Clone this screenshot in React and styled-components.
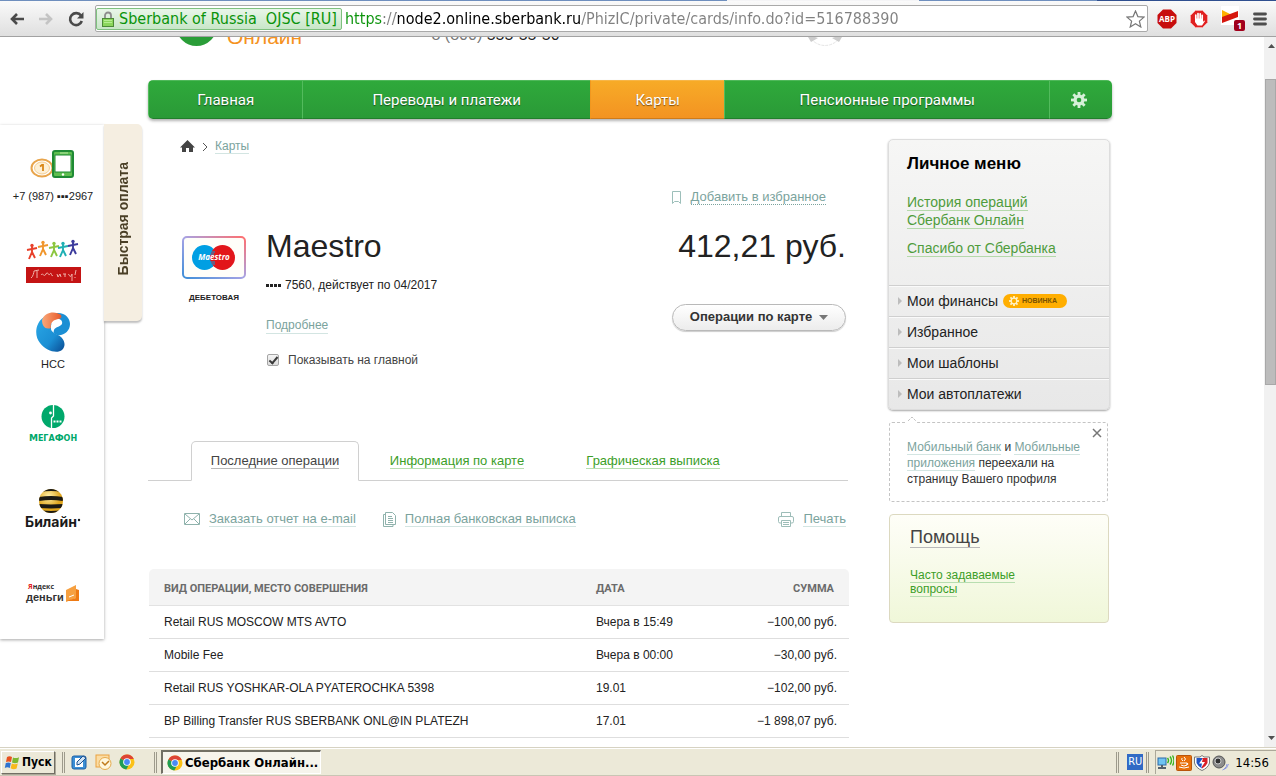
import React, { useState } from 'react';
import styled, { createGlobalStyle, css } from 'styled-components';

const SANS = "'Liberation Sans', Arial, sans-serif";
const UI = "'DejaVu Sans Condensed', 'Open Sans', Tahoma, sans-serif";

const GlobalStyle = createGlobalStyle`
  * {
    box-sizing: border-box;
  }
  body {
    margin: 0;
    background: #ffffff;
    color: #222222;
    font-family: ${SANS};
    font-size: 12px;
    line-height: 16px;
  }
  button, input {
    font-family: inherit;
  }
  svg {
    display: block;
    flex: none;
  }
`;

/* ---------- browser window ---------- */

const Window = styled.div`
  display: flex;
  flex-direction: column;
  height: 100vh;
  overflow: hidden;
`;

const TabStrip = styled.div`
  flex: none;
  height: 1px;
  background: linear-gradient(to right, #6f8fbe 57%, #f4f4f6 57%, #f4f4f6 72%, #6f8fbe 72%, #6f8fbe 86%, #2f4f8f 86%);
`;

const Toolbar = styled.div`
  flex: none;
  display: flex;
  align-items: center;
  height: 36px;
  padding: 0 4px 0 8px;
  background: linear-gradient(#fafafa, #dfdfdf);
  border-bottom: 1px solid #a2a2a2;
`;

const HeaderGap = styled.div`
  width: 9px;
`;

const ToolButton = styled.button`
  display: flex;
  align-items: center;
  justify-content: center;
  width: ${(p) => p.$width || 29}px;
  height: 26px;
  padding: 0;
  border: 0;
  background: none;
`;

const AddressBar = styled.form`
  flex: 1;
  min-width: 0;
  display: flex;
  align-items: center;
  height: 27px;
  margin-right: 4px;
  padding: 1px 0;
  background: #ffffff;
  border: 1px solid #a9a9a9;
  border-radius: 2px;
  font-family: ${UI};
  font-size: 16px;
`;

const Certificate = styled.span`
  flex: none;
  display: flex;
  align-items: center;
  gap: 5px;
  height: 22px;
  padding: 0 4px 0 5px;
  color: #0a930a;
  background: linear-gradient(#e9f6e9, #c8e6c8);
  border: 1px solid #7fc07f;
  border-radius: 2px;
  white-space: pre;
`;

const UrlInput = styled.input`
  flex: 1;
  min-width: 0;
  padding: 0 0 0 3px;
  border: 0;
  outline: none;
  font-size: 16px;
  color: transparent;
  background: linear-gradient(to right, #0a930a 41px, #808080 41px, #808080 54px, #000000 54px, #000000 238px, #808080 238px);
  -webkit-background-clip: text;
  background-clip: text;
`;

const Viewport = styled.div`
  flex: 1;
  min-height: 0;
  display: flex;
  overflow: hidden;
`;

const Page = styled.div`
  flex: 1;
  min-width: 0;
  display: flex;
  padding-right: 152px;
`;

const Scrollbar = styled.div`
  flex: none;
  display: flex;
  flex-direction: column;
  width: 12px;
  background: #f1f1f1;
`;

const ScrollArrow = styled.button`
  display: flex;
  align-items: center;
  justify-content: center;
  height: 18px;
  padding: 0 0 0 3px;
  border: 0;
  background: none;
`;

const ScrollTrack = styled.div`
  flex: 1;
  display: flex;
  flex-direction: column;
  padding: 24px 0 0 1px;
`;

const ScrollThumb = styled.div`
  height: 47%;
  background: #bcbcbc;
  border: 1px solid #a8a8a8;
`;

/* ---------- quick payment panel ---------- */

const FastPay = styled.aside`
  flex: none;
  display: flex;
  align-items: flex-start;
  width: 148px;
  margin-top: 87px;
`;

const FastPayList = styled.ul`
  display: flex;
  flex-direction: column;
  align-items: center;
  width: 104px;
  margin: 1px 0 0;
  padding: 24px 0 32px 2px;
  list-style: none;
  background: #ffffff;
  box-shadow: 0 1px 3px rgba(0, 0, 0, 0.35);
`;

const FastPayItem = styled.li`
  display: flex;
  flex-direction: column;
  align-items: center;
  gap: ${(p) => p.$gap || 0}px;
  height: ${(p) => p.$height}px;
  font-size: 11px;
  white-space: nowrap;
`;

const FastPayTab = styled.button`
  display: flex;
  align-items: center;
  justify-content: center;
  width: 38px;
  height: 197px;
  padding: 0 0 8px;
  border: 0;
  border-radius: 0 5px 5px 0;
  background: #f5eee1;
  box-shadow: 0 2px 2px rgba(0, 0, 0, 0.25);
  color: #4a3f26;
  font-size: 14px;
  font-weight: bold;
  span {
    writing-mode: vertical-rl;
    transform: rotate(180deg);
  }
`;

/* ---------- site header and menu ---------- */

const Content = styled.div`
  flex: 1;
  min-width: 0;
`;

const SiteHeader = styled.header`
  display: flex;
  align-items: flex-end;
  height: 43px;
  padding: 0 268px 31px 28px;
  overflow: hidden;
`;

const HeaderSpace = styled.div`
  flex: ${(p) => p.$grow};
`;

const LogoText = styled.span`
  margin-left: 10px;
  color: #f5921e;
  font-size: 21px;
  line-height: 24px;
`;

const HeaderPhone = styled.span`
  padding-bottom: 2px;
  color: #222222;
  font-size: 16px;
  line-height: 24px;
  i {
    color: #777777;
    font-style: normal;
  }
`;

const Nav = styled.nav`
  display: flex;
  height: 39px;
  border-radius: 5px;
  overflow: hidden;
  box-shadow: 0 2px 3px rgba(0, 0, 0, 0.3);
`;

const NavItem = styled.a`
  flex: ${(p) => p.$grow} 1 0;
  display: flex;
  align-items: center;
  justify-content: center;
  color: #ffffff;
  font-family: Roboto, ${SANS};
  font-size: 15px;
  text-decoration: none;
  text-shadow: 0 1px 1px rgba(0, 0, 0, 0.5);
  background: linear-gradient(#2fa93b, #2a9a37);
  border-left: 1px solid #53bb5d;
  border-top: 1px solid #4fb85a;
  border-bottom: 1px solid #217f2c;
  ${(p) =>
    p.$active &&
    css`
      background: linear-gradient(#f7ab27, #f39322);
      border-color: #f7b648 #d9801a #cf7b19 #f0971f;
    `}
  ${(p) =>
    p.$fixed &&
    css`
      flex: none;
      width: 63px;
      padding-right: 4px;
    `}
`;

const Columns = styled.div`
  display: flex;
  align-items: flex-start;
  gap: 40px;
  padding: 20px 2px 0 0;
`;

const Main = styled.main`
  flex: 1;
  min-width: 0;
`;

/* ---------- links ---------- */

const tones = {
  green: ['#3c9e28', '#b8deb0'],
  menu: ['#4f9c3c', '#b5d9ab'],
  teal: ['#7ba39d', '#d3e5e2'],
  dark: ['#444444', '#b9b9b9'],
};

const TextLink = styled.a`
  color: ${(p) => tones[p.$tone][0]};
  border-bottom: 1px ${(p) => (p.$dotted ? 'dotted' : 'solid')}
    ${(p) => (p.$dotted ? tones[p.$tone][0] : tones[p.$tone][1])};
  text-decoration: none;
`;

/* ---------- card info ---------- */

const Breadcrumbs = styled.div`
  display: flex;
  align-items: center;
  gap: 7px;
  padding-left: 32px;
  font-size: 12px;
  line-height: 14px;
`;

const Favourite = styled.div`
  display: flex;
  align-items: center;
  justify-content: flex-end;
  gap: 10px;
  margin-top: 36px;
  padding-right: 22px;
  font-size: 13px;
  line-height: 14px;
`;

const CardInfo = styled.section`
  display: flex;
  align-items: flex-start;
  padding: 23px 2px 0 34px;
`;

const CardKind = styled.div`
  display: flex;
  flex-direction: column;
  align-items: center;
  gap: 11px;
  width: 64px;
  padding-top: 8px;
  font-size: 8px;
  font-weight: bold;
`;

const CardDetails = styled.div`
  flex: 1;
  display: flex;
  flex-direction: column;
  align-items: flex-start;
  margin-left: 20px;
`;

const Title = styled.h1`
  margin: 0;
  font-size: 32px;
  font-weight: normal;
  line-height: 36px;
`;

const CardNumber = styled.div`
  display: flex;
  align-items: center;
  gap: 4px;
  margin: 13px 0 24px;
`;

const CheckLabel = styled.label`
  display: flex;
  align-items: center;
  gap: 9px;
  margin-top: 18px;
  color: #444444;
`;

const Checkbox = styled.input`
  appearance: none;
  width: 12px;
  height: 12px;
  margin: 0 0 0 1px;
  border: 1px solid #a5a5a5;
  border-radius: 2px;
  background: linear-gradient(#f4f4f4, #dddddd);
  &:checked::after {
    content: '';
    display: block;
    width: 3px;
    height: 7px;
    margin: 0 0 0 3px;
    border: solid #3a3a3a;
    border-width: 0 2px 2px 0;
    transform: rotate(40deg);
  }
`;

const CardSum = styled.div`
  display: flex;
  flex-direction: column;
  align-items: flex-end;
  gap: 40px;
  font-size: 32px;
  line-height: 36px;
`;

const OperationsButton = styled.button`
  display: flex;
  align-items: center;
  justify-content: center;
  gap: 7px;
  width: 174px;
  height: 27px;
  padding: 0 0 2px;
  border: 1px solid #b9b9b9;
  border-radius: 14px;
  background: linear-gradient(#ffffff, #ececec);
  box-shadow: 0 1px 1px rgba(0, 0, 0, 0.2);
  color: #333333;
  font-size: 13px;
  font-weight: bold;
`;

/* ---------- tabs and table ---------- */

const Tabs = styled.div`
  display: flex;
  height: 40px;
  margin-top: 73px;
  &::after,
  &::before {
    content: '';
    border-bottom: 1px solid #d0d0d0;
  }
  &::before {
    width: 43px;
  }
  &::after {
    flex: 1;
  }
`;

const Tab = styled.div`
  display: flex;
  align-items: center;
  justify-content: center;
  width: ${(p) => p.$width}px;
  padding-top: 2px;
  border-bottom: 1px solid #d0d0d0;
  font-size: 13px;
  line-height: 14px;
  ${(p) =>
    p.$active &&
    css`
      padding-top: 1px;
      border: 1px solid #d0d0d0;
      border-bottom-color: transparent;
      border-radius: 5px 5px 0 0;
    `}
`;

const Actions = styled.div`
  display: flex;
  align-items: center;
  padding: 30px 2px 0 36px;
  font-size: 13px;
  line-height: 15px;
`;

const Action = styled.div`
  display: flex;
  align-items: center;
  gap: 9px;
  margin-right: 27px;
  &:last-child {
    margin: 0 0 0 auto;
  }
`;

const Operations = styled.table`
  width: 100%;
  margin: 42px 0 0 1px;
  border-collapse: separate;
  border-spacing: 0;
  th {
    height: 37px;
    padding: 4px 15px 0;
    background: #f4f4f4;
    border-bottom: 1px solid #e2e2e2;
    color: #6b6b6b;
    font-family: Roboto, ${SANS};
    font-size: 11px;
    text-align: left;
  }
  th:first-child {
    border-radius: 5px 0 0 0;
  }
  th:last-child {
    border-radius: 0 5px 0 0;
    text-align: right;
  }
  td {
    height: 33px;
    padding: 0 12px 0 15px;
    border-bottom: 1px solid #dedede;
  }
  td:last-child {
    text-align: right;
  }
`;

/* ---------- sidebar ---------- */

const Sidebar = styled.div`
  flex: none;
  width: 222px;
`;

const MenuCard = styled.section`
  border: 1px solid #dddddd;
  border-radius: 5px;
  background: linear-gradient(#f6f6f5, #e8e8e8);
  box-shadow: 0 1px 2px rgba(0, 0, 0, 0.35);
`;

const MenuTitle = styled.h2`
  margin: 0;
  padding: 14px 18px 0;
  color: #000000;
  font-size: 17px;
  line-height: 20px;
`;

const MenuLinks = styled.div`
  display: flex;
  flex-direction: column;
  gap: 10px;
  padding: 19px 18px 28px;
  font-size: 14px;
  line-height: 18px;
`;

const MenuRow = styled.a`
  display: flex;
  align-items: center;
  gap: 5px;
  height: 31px;
  padding-left: 9px;
  border-top: 1px solid #cfcfcf;
  box-shadow: inset 0 1px 0 #fafafa;
  color: #222222;
  font-size: 14px;
  text-decoration: none;
`;

const NewBadge = styled.span`
  display: flex;
  align-items: center;
  gap: 3px;
  height: 14px;
  padding: 0 10px 0 6px;
  border-radius: 7px;
  background: #ffae00;
  color: #7a5200;
  font-size: 7px;
  font-weight: bold;
`;

const Notice = styled.section`
  position: relative;
  margin: 12px 2px 0 1px;
  padding: 16px 18px 14px 17px;
  border: 1px dashed #c4c4c4;
  border-radius: 3px;
  color: #333333;
  font-size: 12px;
`;

const NoticeClose = styled.button`
  position: absolute;
  top: 5px;
  right: 5px;
  padding: 0;
  border: 0;
  background: none;
`;

const NoticeTip = styled.span`
  position: absolute;
  top: -7px;
  left: 17px;
  background: #ffffff;
`;

const Help = styled.section`
  margin: 12px 1px 0;
  padding: 13px 80px 26px 20px;
  border: 1px solid #dcd9c0;
  border-radius: 4px;
  background: linear-gradient(#fefef8, #f0f7d9);
  font-size: 12px;
  line-height: 14px;
`;

const HelpTitle = styled.h2`
  margin: 0 0 21px;
  font-size: 18px;
  font-weight: normal;
  line-height: 19px;
`;

/* ---------- task bar ---------- */

const Taskbar = styled.footer`
  flex: none;
  display: flex;
  align-items: center;
  height: 29px;
  padding: 1px 0 0 1px;
  background: #ece9d8;
  border-top: 1px solid #d6d2c2;
  border-bottom: 1px solid #c9c5b4;
  box-shadow: inset 0 1px 0 #ffffff;
  color: #000000;
  font-family: ${UI};
  font-size: 12px;
`;

const StartButton = styled.button`
  display: flex;
  align-items: center;
  gap: 2px;
  height: 23px;
  width: 54px;
  padding: 0 2px;
  border: 1px solid;
  border-color: #ffffff #716f64 #716f64 #ffffff;
  box-shadow: 1px 1px 0 #aca899;
  background: #ece9d8;
  font-size: 12px;
  font-weight: bold;
`;

const Grip = styled.div`
  width: 3px;
  height: 21px;
  margin: 0 ${(p) => p.$right}px 0 ${(p) => p.$left}px;
  border: solid;
  border-width: 0 1px;
  border-color: #ffffff #9d9a8b;
`;

const QuickLaunch = styled.div`
  display: flex;
  gap: 7px;
  width: 64px;
`;

const TaskButton = styled.button`
  display: flex;
  align-items: center;
  gap: 2px;
  width: 160px;
  height: 24px;
  padding: 0 0 0 4px;
  border: 1px solid;
  border-width: 2px 1px 1px 2px;
  border-color: #716f64 #ffffff #ffffff #716f64;
  background: #f6f4ec;
  font-size: 13px;
  font-weight: bold;
  white-space: nowrap;
`;

const Language = styled.span`
  width: 16px;
  height: 16px;
  background: #316ac5;
  color: #ffffff;
  font-size: 11px;
  text-align: center;
`;

const Tray = styled.div`
  display: flex;
  align-items: center;
  gap: 2px;
  height: 24px;
  padding: 0 7px 0 1px;
  border: solid #aca899;
  border-width: 1px 0 0 1px;
  time {
    margin-left: 4px;
    font-size: 13px;
  }
`;

const Push = styled.div`
  flex: 1;
`;

/* ---------- drawings ---------- */

const Arrow = ({ color, flip }) => (
  <svg width="16" height="14" viewBox="0 0 16 14">
    <path
      d={flip ? 'M1 7h12M8 2l5 5-5 5' : 'M15 7H3M8 2L3 7l5 5'}
      fill="none"
      stroke={color}
      strokeWidth="2.6"
    />
  </svg>
);

const Reload = () => (
  <svg width="18" height="18" viewBox="0 0 18 18">
    <path d="M14 5.6A6 6 0 1 0 14.8 11" fill="none" stroke="#4a4a4a" strokeWidth="2.6" />
    <path d="M16.5 2v6.5H10z" fill="#4a4a4a" />
  </svg>
);

const Lock = () => (
  <svg width="12" height="16" viewBox="0 0 12 16">
    <path d="M3 8V4.5a3 3 0 0 1 6 0V8" fill="none" stroke="#8d8d8d" strokeWidth="1.8" />
    <rect x="0.5" y="7.5" width="11" height="8" fill="#8ad65c" stroke="#4c8a38" />
    <path d="M2 9.5h8M2 11.5h8" stroke="#b6ee92" />
  </svg>
);

const Star = () => (
  <svg width="19" height="18" viewBox="0 0 19 18">
    <path
      d="M9.5 1l2.4 5.6 6.1.5-4.6 4 1.4 5.9-5.3-3.2L4.2 17l1.4-5.9L1 7.1l6.1-.5z"
      fill="#fff"
      stroke="#777"
      strokeWidth="1.2"
    />
  </svg>
);

const AdBlockPlus = () => (
  <svg width="20" height="20" viewBox="0 0 20 20">
    <path d="M6 .5h8L19.5 6v8L14 19.500H6L.5 14V6z" fill="#c70d0d" />
    <text x="10" y="13" fontSize="8" fontWeight="bold" fill="#fff" textAnchor="middle" fontFamily="Open Sans">
      ABP
    </text>
  </svg>
);

const AdBlock = () => (
  <svg width="18" height="18" viewBox="0 0 18 18">
    <path d="M5.5.5h7l5 5v7l-5 5h-7l-5-5v-7z" fill="#e02020" stroke="#f6a5a5" />
    <path
      d="M5.8 9V5.2M8 8.500V3.500M10.2 8.500V3.800M12.2 9V5.400"
      stroke="#fff"
      strokeWidth="1.7"
      strokeLinecap="round"
    />
    <path d="M5 8.500h8V12l1-1.500 1 .5-3 4.500H7.500L5 12z" fill="#fff" />
  </svg>
);

const FlagIcon = () => (
  <svg width="24" height="25" viewBox="0 0 24 25">
    <rect width="18" height="19" fill="#fff" />
    <path d="M1 4l9 4.500-9 3.500z" fill="#ffb100" />
    <path d="M1 11l16-6v6L1 17z" fill="#d6170e" />
    <rect x="13" y="14" width="11" height="11" rx="2" fill="#a1001c" />
    <text x="18.5" y="23" fontSize="9" fontWeight="bold" fill="#fff" textAnchor="middle" fontFamily="Open Sans">
      1
    </text>
  </svg>
);

const Burger = () => (
  <svg width="14" height="14" viewBox="0 0 14 14">
    <path d="M1.500 2h11M1.500 7h11M1.500 12h11" stroke="#4d4d4d" strokeWidth="2.800" strokeLinecap="round" />
  </svg>
);

const Triangle = ({ d, color = '#505050', width = 7, height = 5 }) => (
  <svg width={width} height={height} viewBox={`0 0 ${width} ${height}`}>
    <path d={d} fill={color} />
  </svg>
);

const Gear = ({ size, color, hole, holeRadius = 2.3 }) => (
  <svg width={size} height={size} viewBox="0 0 16 16">
    {[0, 45, 90, 135].map((a) => (
      <rect key={a} x="6.6" y="0" width="2.8" height="16" fill={color} transform={`rotate(${a} 8 8)`} />
    ))}
    <circle cx="8" cy="8" r="5.5" fill={color} />
    <circle cx="8" cy="8" r={holeRadius} fill={hole} />
  </svg>
);

const PhonePay = () => (
  <svg width="45" height="30" viewBox="0 0 45 30">
    <ellipse cx="12" cy="19" rx="10.500" ry="8.500" fill="#fff" stroke="#e8a54c" strokeWidth="2" />
    <ellipse cx="12" cy="19" rx="7.500" ry="6" fill="#fdf0d6" stroke="#f3cd92" />
    <path d="M10 17.500l2-1.500h1v6" fill="none" stroke="#d98718" strokeWidth="1.800" />
    <rect x="23" y="2" width="20" height="26" rx="2" fill="#5fbf4f" stroke="#1f8a35" strokeWidth="2" />
    <rect x="25" y="6" width="16" height="17" fill="#fff" stroke="#1f8a35" />
    <path d="M30 4h8" stroke="#b7e6a5" />
    <circle cx="33" cy="25.500" r="1.200" fill="#fff" />
  </svg>
);

const people = [
  ['#e8412c', 5, 8],
  ['#f0962c', 16, 5],
  ['#8cc63f', 27, 6],
  ['#1fb0b4', 36, 6],
  ['#3b3a9c', 46, 4],
];

const GiveLife = () => (
  <svg width="55" height="46" viewBox="0 0 55 46">
    {people.map(([c, x, y]) => (
      <g key={c} stroke={c} fill="none" strokeWidth="1.900" transform={`translate(${x} ${y})`}>
        <circle cx="1" cy="-1.500" r="1.700" fill={c} stroke="none" />
        <path d="M-4 3l5-1 5-1M1 0v5l-3 7M1 5l3 6" />
      </g>
    ))}
    <rect y="28" width="55" height="16" fill="#c41414" />
    <path
      d="M5 39c2-1 3-6 3-7l5-1M11 39V32M15 36c2-3 3 3 5-1s2 3 4 0 1 4 3 1M31 35l1 3 2-3 1 3M37 35h3M39 35v3M42 36c2-2 1 3 3 1l1-2v7M50 31l-1 5M49 38v1"
      fill="none"
      stroke="#efb0a8"
    />
  </svg>
);

const Rostelecom = () => (
  <svg width="35" height="41" viewBox="0 0 35 41">
    <defs>
      <linearGradient id="blueWave" x1="0" y1="0" x2="1" y2="1">
        <stop offset="0" stopColor="#2aa7e6" />
        <stop offset="0.600" stopColor="#1b8fd4" />
        <stop offset="1" stopColor="#0a4a92" />
      </linearGradient>
      <linearGradient id="orangeWave" x1="0" y1="0" x2="1" y2="0">
        <stop offset="0" stopColor="#f9a97a" />
        <stop offset="1" stopColor="#e8592a" />
      </linearGradient>
    </defs>
    <path d="M8 5C-1 11-2 24 4 31c6 8 17 11 22 7 5-5 2-12-4-15-6-2-8-6-6-11z" fill="url(#blueWave)" />
    <path d="M20 1c9-1 14 5 14 11 0 7-6 12-13 11-3-1-4-3-3-5 1-3 6-3 8-6 1-3-2-6-6-5z" fill="#1b8fd4" />
    <path d="M6 8C9-1 20-1 25 3c1 2 0 4-3 4-5 1-8 4-7 9C9 18 6 14 6 8z" fill="url(#orangeWave)" />
    <path d="M15 15c0-5 4-8 9-6 2 1 1 3-2 4-4 2-6 4-5 7-2-1-2-3-2-5z" fill="#fff" />
  </svg>
);

const Megafon = () => (
  <svg width="52" height="37" viewBox="0 0 52 37">
    <circle cx="26" cy="11.500" r="11.500" fill="#00a86b" />
    <path d="M26.500 0v11l-2 2v10" fill="none" stroke="#fff" strokeWidth="1.300" />
    <circle cx="23.500" cy="8" r="1.400" fill="#fff" />
    <path d="M26.500 16.500h9" stroke="#fff" strokeWidth="2" strokeDasharray="2 1" />
    <text x="26" y="36" fontSize="8" fontWeight="bold" fill="#00a86b" textAnchor="middle" fontFamily="DejaVu Sans">
      <tspan fontSize="9">М</tspan>ЕГА<tspan fontSize="9">Ф</tspan>ОН
    </text>
  </svg>
);

const Beeline = () => (
  <svg width="56" height="42" viewBox="0 0 56 42">
    <defs>
      <clipPath id="ball">
        <circle cx="26" cy="12" r="12" />
      </clipPath>
      <radialGradient id="ballFill" cx="0.400" cy="0.300">
        <stop offset="0" stopColor="#fff0a8" />
        <stop offset="1" stopColor="#e0a51c" />
      </radialGradient>
    </defs>
    <g clipPath="url(#ball)">
      <rect x="14" width="24" height="24" fill="url(#ballFill)" />
      <path d="M14 1.500q12 -3 24 0M14 10q12-2 24 0M14 17q12 1 24 0M14 23q12 2 24 0" stroke="#1c1a14" strokeWidth="4" fill="none" />
    </g>
    <text x="26" y="38" fontSize="14" fontWeight="bold" fill="#1a1a1a" textAnchor="middle" fontFamily="Inter">
      Билайн
    </text>
    <circle cx="54" cy="31" r="1.200" fill="#1a1a1a" />
  </svg>
);

const YandexMoney = () => (
  <svg width="56" height="26" viewBox="0 0 56 26">
    <text x="3" y="8" fontSize="7" fontFamily="Open Sans" fontWeight="bold" fill="#333">
      <tspan fill="#e2231a">Я</tspan>ндекс
    </text>
    <text x="1" y="20" fontSize="11" fontFamily="Liberation Sans" fontWeight="bold" fill="#333">
      деньги
    </text>
    <path d="M41 9l10-5v13l-10 4z" fill="#f6a040" />
    <path d="M41 20l10-3V8l3 1v11H41z" fill="#ee7a14" />
    <path d="M44 16l5-2" stroke="#fff" />
  </svg>
);

const Home = () => (
  <svg width="15" height="13" viewBox="0 0 15 13">
    <path d="M7.500 0L15 7.500h-2V12H9V8H6v4H2V7.500H0z" fill="#444" />
  </svg>
);

const MaestroCard = () => (
  <svg width="64" height="43" viewBox="0 0 64 43">
    <defs>
      <linearGradient id="cardEdge" x1="0" y1="1" x2="1" y2="0">
        <stop offset="0" stopColor="#3f8fd8" />
        <stop offset="0.500" stopColor="#a7a3e4" />
        <stop offset="1" stopColor="#ff6f6f" />
      </linearGradient>
    </defs>
    <rect x="1" y="1" width="62" height="41" rx="4" fill="#fffef9" stroke="url(#cardEdge)" strokeWidth="2" />
    <circle cx="22.500" cy="21.500" r="12.500" fill="#009fe3" />
    <circle cx="40.500" cy="21.500" r="12.500" fill="#e2161a" />
    <path d="M28 16h5M28 18h4M28 26h5M29 28h4" stroke="#009fe3" />
    <text x="32" y="24" fontSize="8" fontWeight="bold" fontStyle="italic" fill="#fff" textAnchor="middle" fontFamily="Open Sans">
      Maestro
    </text>
  </svg>
);

const Bookmark = () => (
  <svg width="9" height="13" viewBox="0 0 9 13">
    <path d="M.5.5h8v12l-2-2h-4l-2 2z" fill="none" stroke="#9dbfba" />
  </svg>
);

const Envelope = () => (
  <svg width="16" height="12" viewBox="0 0 16 12">
    <path d="M.5.5h15v11H.5zM1 1l7 6 7-6M1 11l5-5M15 11l-5-5" fill="none" stroke="#8fb2ac" />
  </svg>
);

const Papers = () => (
  <svg width="13" height="15" viewBox="0 0 13 15">
    <path d="M2.500.5h7l3 3v9h-10zM2 2.500H.5v12H10V13M5 4.500h4M5 6.500h5M5 8.500h5M5 10.500h5" fill="none" stroke="#8fb2ac" />
  </svg>
);

const Printer = () => (
  <svg width="16" height="15" viewBox="0 0 16 15">
    <path d="M3.500 4V.5h9V4M3.500 11H2Q.5 11 .5 9.500V6Q.5 4.500 2 4.500h12q1.500 0 1.500 1.500v3.500Q15.500 11 14 11h-1.500M3.500 8.500h9v6h-9zM5 10.500h6M5 12.500h6" fill="none" stroke="#9dbdb8" />
  </svg>
);

const Chrome = () => (
  <svg width="16" height="16" viewBox="0 0 16 16">
    <circle cx="8" cy="8" r="7.500" fill="#fbc116" />
    <path d="M8 8L1.400 4.400A7.500 7.500 0 0 1 14.800 5H8z" fill="#dd4436" />
    <path d="M8 8L1.400 4.400A7.500 7.500 0 0 0 7.300 15.500L10.500 9.500z" fill="#1f9d55" />
    <circle cx="8" cy="8" r="3.800" fill="#fff" />
    <circle cx="8" cy="8" r="2.900" fill="#4a8af4" />
  </svg>
);

const WindowsFlag = () => (
  <svg width="16" height="15" viewBox="0 0 16 15">
    <path d="M3 2q2.500-1.500 5 0L7 7Q4.500 5.800 2 7z" fill="#e8521f" />
    <path d="M9 2.500q2.500 1.300 6-.3L14 7.500q-3 1.300-6 0z" fill="#7cb82f" />
    <path d="M1.800 8q2.500-1.200 5 0l-1 5q-2.500-1.500-5 0z" fill="#2f74d0" />
    <path d="M7.800 8.500q3 1.300 6 0l-1.200 5q-3 1.500-6-.2z" fill="#f8b91c" />
  </svg>
);

const Desktop = () => (
  <svg width="17" height="16" viewBox="0 0 17 16">
    <rect x="1" y="2" width="14" height="13" rx="2" fill="#3b8fd6" stroke="#1d5fa5" />
    <path d="M4 4h8v9H4z" fill="#fff" />
    <path d="M6 11V8l6-6 3 2-6 6z" fill="#cfe3f6" stroke="#1d4f8c" />
  </svg>
);

const Outlook = () => (
  <svg width="17" height="16" viewBox="0 0 17 16">
    <rect x="1" y="1" width="13" height="12" fill="#fbdca4" stroke="#eaa13f" />
    <circle cx="10" cy="9.500" r="6" fill="#fff6dc" stroke="#e5a94b" />
    <path d="M7 8l3 3 4-4" fill="none" stroke="#c07a1c" strokeWidth="1.500" />
  </svg>
);

const NetIcon = () => (
  <svg width="17" height="16" viewBox="0 0 17 16">
    <rect x="1" y="3" width="8" height="7" fill="#6fc3f2" stroke="#2c6aa8" />
    <path d="M1 13h8M5 10v3" stroke="#55606c" strokeWidth="2" />
    <path d="M10.500 3q2 2.500 0 5M13 1.500q3 4 0 8M15.500.5q3 5 0 10" fill="none" stroke="#36b51f" strokeWidth="1.400" />
  </svg>
);

const JavaIcon = () => (
  <svg width="16" height="16" viewBox="0 0 16 16">
    <rect x=".5" y=".5" width="15" height="15" rx="1" fill="#e76f0a" stroke="#b9540a" />
    <path d="M8 2q3 2 0 4M6 3q-1 2 1 3M4 8h7v2q-3 2-6 0M11 8q2.500 1-.5 2M3 12q5 2 10 0" fill="none" stroke="#fff" />
  </svg>
);

const ShieldIcon = () => (
  <svg width="16" height="16" viewBox="0 0 16 16">
    <path d="M8 .5l2 1.500h5.500v6Q14 13 8 15.500 2 13 .5 8V2H6z" fill="#fff" stroke="#777" />
    <path d="M8 3H2.500v5Q4 11.500 8 13.500z" fill="#1f54c4" />
    <path d="M8 3h5.500v5Q12 11.500 8 13.500z" fill="#d81f26" />
    <path d="M9 3L5 8.500h3L7 13l4-6H8z" fill="#fff" />
  </svg>
);

const SpeakerIcon = () => (
  <svg width="17" height="16" viewBox="0 0 17 16">
    <circle cx="7" cy="7" r="6" fill="#8d8d8d" stroke="#555" />
    <circle cx="6" cy="6" r="3" fill="#333" stroke="#c9c9c9" />
    <path d="M12 14q3-2 3-5M10.500 15q5-1 6-6" fill="none" stroke="#8f9be0" />
  </svg>
);

/* ---------- data ---------- */

const navItems = [
  { text: 'Главная', grow: 154 },
  { text: 'Переводы и платежи', grow: 288 },
  { text: 'Карты', grow: 134, active: true },
  { text: 'Пенсионные программы', grow: 325 },
];

const operations = [
  ['Retail RUS MOSCOW MTS AVTO', 'Вчера в 15:49', '−100,00 руб.'],
  ['Mobile Fee', 'Вчера в 00:00', '−30,00 руб.'],
  ['Retail RUS YOSHKAR-OLA PYATEROCHKA 5398', '19.01', '−102,00 руб.'],
  ['BP Billing Transfer RUS SBERBANK ONL@IN PLATEZH', '17.01', '−1 898,07 руб.'],
];

const menuRows = ['Мои финансы', 'Избранное', 'Мои шаблоны', 'Мои автоплатежи'];

/* ---------- page parts ---------- */

const BrowserToolbar = () => {
  const [url, setUrl] = useState(
    'https://node2.online.sberbank.ru/PhizIC/private/cards/info.do?id=516788390'
  );
  return (
    <Toolbar>
      <ToolButton aria-label="Назад" $width={18}><Arrow color="#4a4a4a" /></ToolButton>
      <ToolButton aria-label="Вперёд" $width={40}><Arrow color="#c4c4c4" flip /></ToolButton>
      <ToolButton aria-label="Обновить" $width={20}><Reload /></ToolButton>
      <HeaderGap />
      <AddressBar onSubmit={(e) => e.preventDefault()}>
        <Certificate><Lock />{'Sberbank of Russia  OJSC [RU]'}</Certificate>
        <UrlInput aria-label="Адрес" value={url} onChange={(e) => setUrl(e.target.value)} spellCheck={false} />
        <ToolButton type="button" aria-label="В закладки" $width={24}><Star /></ToolButton>
      </AddressBar>
      <ToolButton aria-label="Adblock Plus"><AdBlockPlus /></ToolButton>
      <ToolButton aria-label="AdBlock" $width={36}><AdBlock /></ToolButton>
      <ToolButton aria-label="Расширение" $width={31}><FlagIcon /></ToolButton>
      <ToolButton aria-label="Меню" $width={24}><Burger /></ToolButton>
    </Toolbar>
  );
};

const FastPayment = () => (
  <FastPay>
    <FastPayList>
      <FastPayItem $height={90} $gap={9}><PhonePay />+7 (987) ▪▪▪2967</FastPayItem>
      <FastPayItem $height={73}><GiveLife /></FastPayItem>
      <FastPayItem $height={93} $gap={3}><Rostelecom />НСС</FastPayItem>
      <FastPayItem $height={84}><Megafon /></FastPayItem>
      <FastPayItem $height={92}><Beeline /></FastPayItem>
      <FastPayItem $height={26}><YandexMoney /></FastPayItem>
    </FastPayList>
    <FastPayTab><span>Быстрая оплата</span></FastPayTab>
  </FastPay>
);

const Header = () => (
  <SiteHeader>
    <svg width="41" height="41" viewBox="0 0 41 41">
      <circle cx="20.500" cy="17.500" r="20.500" fill="#2a9d38" />
    </svg>
    <LogoText>Онлайн</LogoText>
    <HeaderSpace $grow={127} />
    <HeaderPhone><i>8 (800)</i> 555-55-50</HeaderPhone>
    <HeaderSpace $grow={242} />
    <svg width="38" height="38" viewBox="0 0 38 38">
      <circle cx="19" cy="17" r="17.500" fill="#fff" stroke="#e4e4e4" strokeDasharray="3 1" />
      <path d="M2 26l4-1 6 2-7 4zM36 26l-4-1-6 2 7 4z" fill="#cccccc" />
    </svg>
  </SiteHeader>
);

const CardBlock = () => {
  const [shown, setShown] = useState(true);
  return (
    <CardInfo>
      <CardKind><MaestroCard />ДЕБЕТОВАЯ</CardKind>
      <CardDetails>
        <Title>Maestro</Title>
        <CardNumber>
          <svg width="15" height="3" viewBox="0 0 15 3">
            <path d="M0 1.500h3M4 1.500h3M8 1.500h3M12 1.500h3" stroke="#222" strokeWidth="3" />
          </svg>
          7560, действует по 04/2017
        </CardNumber>
        <TextLink href="#details" $tone="teal">Подробнее</TextLink>
        <CheckLabel>
          <Checkbox type="checkbox" checked={shown} onChange={(e) => setShown(e.target.checked)} />
          Показывать на главной
        </CheckLabel>
      </CardDetails>
      <CardSum>
        412,21 руб.
        <OperationsButton>
          Операции по карте
          <Triangle d="M0 2h9L4.500 7z" color="#777" width={9} height={7} />
        </OperationsButton>
      </CardSum>
    </CardInfo>
  );
};

const OperationsTable = () => (
  <Operations>
    <colgroup>
      <col />
      <col width="140" />
      <col width="128" />
    </colgroup>
    <thead>
      <tr>
        <th>ВИД ОПЕРАЦИИ, МЕСТО СОВЕРШЕНИЯ</th>
        <th>ДАТА</th>
        <th>СУММА</th>
      </tr>
    </thead>
    <tbody>
      {operations.map(([place, date, sum]) => (
        <tr key={place}>
          <td>{place}</td>
          <td>{date}</td>
          <td>{sum}</td>
        </tr>
      ))}
    </tbody>
  </Operations>
);

const SidebarBlock = () => (
  <Sidebar>
    <MenuCard>
      <MenuTitle>Личное меню</MenuTitle>
      <MenuLinks>
        <div>
          <TextLink href="#history" $tone="menu">История операций</TextLink>
          <br />
          <TextLink href="#history" $tone="menu">Сбербанк Онлайн</TextLink>
        </div>
        <div>
          <TextLink href="#thanks" $tone="menu">Спасибо от Сбербанка</TextLink>
        </div>
      </MenuLinks>
      {menuRows.map((row, i) => (
        <MenuRow href="#menu" key={row}>
          <Triangle d="M0 0l4 4-4 4z" color="#bdbdbd" width={4} height={8} />
          {row}
          {i === 0 && (
            <NewBadge><Gear size={10} color="#fff3c8" hole="#ffae00" holeRadius={3.5} />НОВИНКА</NewBadge>
          )}
        </MenuRow>
      ))}
    </MenuCard>
    <Notice>
      <NoticeTip>
        <svg width="10" height="7" viewBox="0 0 10 7">
          <path d="M1 5l4-4 4 4" fill="none" stroke="#c4c4c4" strokeDasharray="3 1" />
        </svg>
      </NoticeTip>
      <NoticeClose aria-label="Закрыть">
        <svg width="10" height="10" viewBox="0 0 10 10">
          <path d="M1 1l8 8M9 1L1 9" stroke="#777" strokeWidth="1.500" />
        </svg>
      </NoticeClose>
      <TextLink href="#bank" $tone="teal">Мобильный банк</TextLink> и{' '}
      <TextLink href="#apps" $tone="teal">Мобильные приложения</TextLink> переехали на
      страницу Вашего профиля
    </Notice>
    <Help>
      <HelpTitle><TextLink href="#help" $tone="dark">Помощь</TextLink></HelpTitle>
      <TextLink href="#faq" $tone="green">Часто задаваемые вопросы</TextLink>
    </Help>
  </Sidebar>
);

const SystemTaskbar = () => (
  <Taskbar>
    <StartButton><WindowsFlag />Пуск</StartButton>
    <Grip $left={7} $right={6} />
    <QuickLaunch><Desktop /><Outlook /><Chrome /></QuickLaunch>
    <Grip $left={19} $right={4} />
    <TaskButton><Chrome />Сбербанк Онлайн...</TaskButton>
    <Push />
    <Grip $left={0} $right={8} />
    <Language>RU</Language>
    <Grip $left={3} $right={6} />
    <Tray>
      <NetIcon /><JavaIcon /><ShieldIcon /><SpeakerIcon />
      <time>14:56</time>
    </Tray>
  </Taskbar>
);

const App = () => (
  <Window>
    <GlobalStyle />
    <TabStrip />
    <BrowserToolbar />
    <Viewport>
      <Page>
        <FastPayment />
        <Content>
          <Header />
          <Nav>
            {navItems.map((item) => (
              <NavItem href="#nav" key={item.text} $grow={item.grow} $active={item.active}>
                {item.text}
              </NavItem>
            ))}
            <NavItem href="#settings" aria-label="Настройки" $fixed>
              <Gear size={16} color="#d5f0d8" hole="#2ca239" />
            </NavItem>
          </Nav>
          <Columns>
            <Main>
              <Breadcrumbs>
                <Home />
                <svg width="6" height="10" viewBox="0 0 6 10">
                  <path d="M1 1l4 4-4 4" fill="none" stroke="#555" />
                </svg>
                <TextLink href="#cards" $tone="teal">Карты</TextLink>
              </Breadcrumbs>
              <Favourite>
                <Bookmark />
                <TextLink href="#favourite" $tone="teal" $dotted>Добавить в избранное</TextLink>
              </Favourite>
              <CardBlock />
              <Tabs>
                <Tab $active $width={168}><TextLink href="#last" $tone="dark">Последние операции</TextLink></Tab>
                <Tab $width={196}><TextLink href="#info" $tone="green">Информация по карте</TextLink></Tab>
                <Tab $width={196}><TextLink href="#graph" $tone="green">Графическая выписка</TextLink></Tab>
              </Tabs>
              <Actions>
                <Action><Envelope /><TextLink href="#mail" $tone="teal">Заказать отчет на e-mail</TextLink></Action>
                <Action><Papers /><TextLink href="#full" $tone="teal">Полная банковская выписка</TextLink></Action>
                <Action><Printer /><TextLink href="#print" $tone="teal">Печать</TextLink></Action>
              </Actions>
              <OperationsTable />
            </Main>
            <SidebarBlock />
          </Columns>
        </Content>
      </Page>
      <Scrollbar>
        <ScrollArrow aria-label="Вверх"><Triangle d="M0 4l3.500-4L7 4z" /></ScrollArrow>
        <ScrollTrack><ScrollThumb /></ScrollTrack>
        <ScrollArrow aria-label="Вниз"><Triangle d="M0 0h7L3.500 4z" /></ScrollArrow>
      </Scrollbar>
    </Viewport>
    <SystemTaskbar />
  </Window>
);

export default App;
